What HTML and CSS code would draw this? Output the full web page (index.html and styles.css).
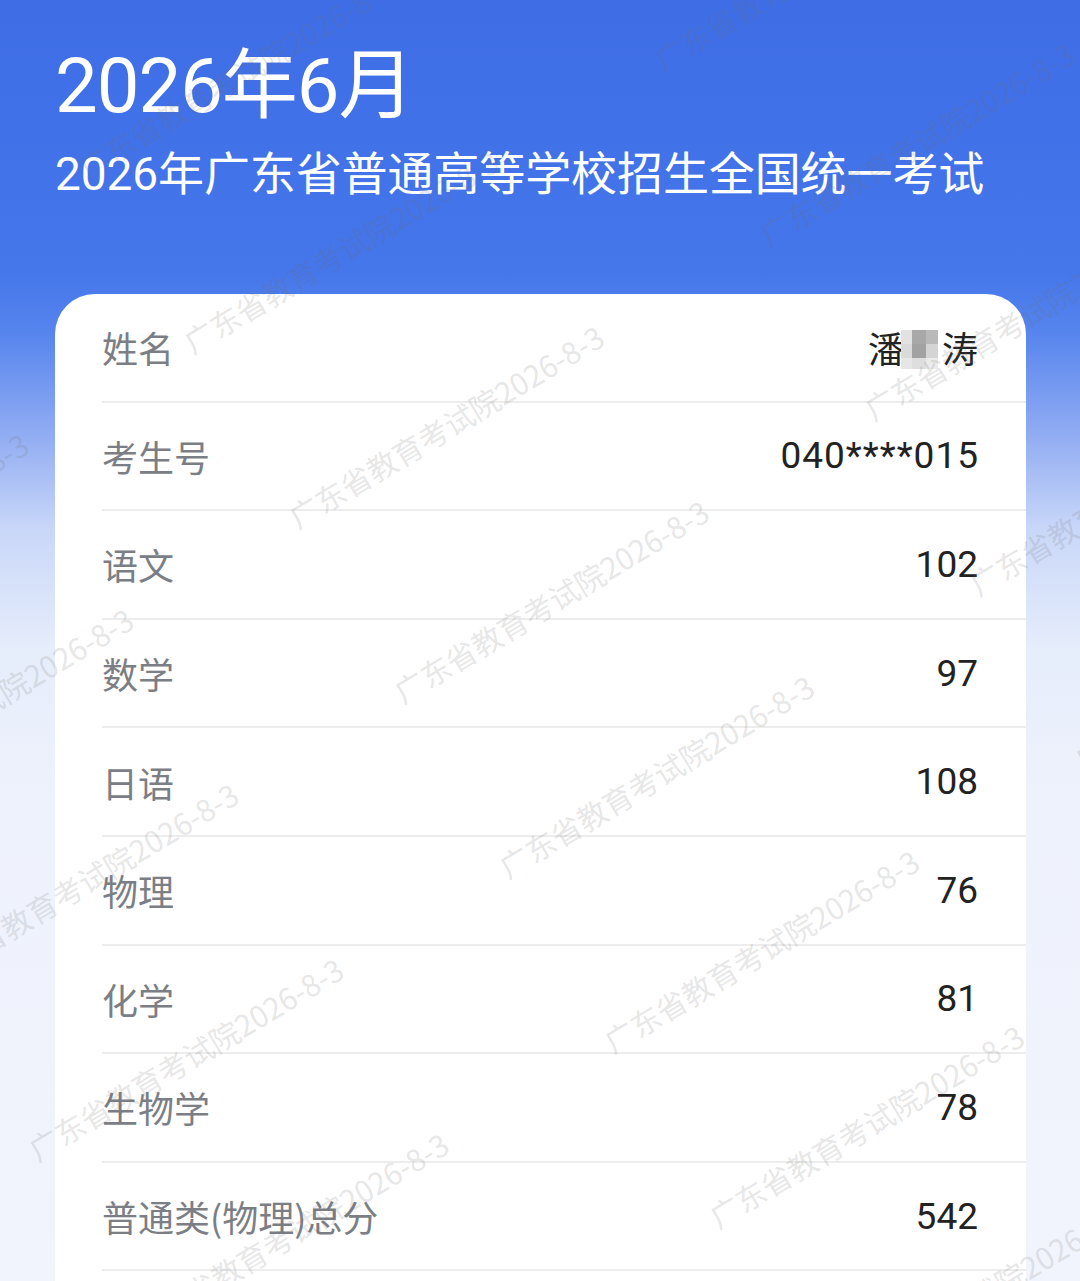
FILE: index.html
```html
<!DOCTYPE html>
<html lang="zh-CN">
<head>
<meta charset="utf-8">
<title>2026年6月 成绩</title>
<link rel="stylesheet" href="styles.css">
</head>
<body>
<div class="page">
  <header class="head">
    <h1 class="title">2026年6月</h1>
    <p class="subtitle">2026年广东省普通高等学校招生全国统一考试</p>
  </header>
  <section class="card">
    <div class="row"><span class="label">姓名</span><span class="value name">潘<span class="mosaic"><i class="m1"></i><i class="m2"></i><i class="m3"></i><i class="m4"></i><i class="m5"></i><i class="m6"></i><i class="m7"></i><i class="m8"></i><i class="m9"></i></span>涛</span></div>
    <div class="row"><span class="label">考生号</span><span class="value id">040****015</span></div>
    <div class="row"><span class="label">语文</span><span class="value">102</span></div>
    <div class="row"><span class="label">数学</span><span class="value">97</span></div>
    <div class="row"><span class="label">日语</span><span class="value">108</span></div>
    <div class="row"><span class="label">物理</span><span class="value">76</span></div>
    <div class="row"><span class="label">化学</span><span class="value">81</span></div>
    <div class="row"><span class="label">生物学</span><span class="value">78</span></div>
    <div class="row"><span class="label">普通类(物理)总分</span><span class="value">542</span></div>
  </section>
  <div class="watermarks" aria-hidden="true">
    <div class="wm-plane">
      <div class="wm-row"><span>广东省教育考试院2026-8-3</span><span>广东省教育考试院2026-8-3</span><span>广东省教育考试院2026-8-3</span><span>广东省教育考试院2026-8-3</span><span>广东省教育考试院2026-8-3</span></div>
      <div class="wm-row"><span>广东省教育考试院2026-8-3</span><span>广东省教育考试院2026-8-3</span><span>广东省教育考试院2026-8-3</span><span>广东省教育考试院2026-8-3</span><span>广东省教育考试院2026-8-3</span></div>
      <div class="wm-row"><span>广东省教育考试院2026-8-3</span><span>广东省教育考试院2026-8-3</span><span>广东省教育考试院2026-8-3</span><span>广东省教育考试院2026-8-3</span><span>广东省教育考试院2026-8-3</span></div>
      <div class="wm-row"><span>广东省教育考试院2026-8-3</span><span>广东省教育考试院2026-8-3</span><span>广东省教育考试院2026-8-3</span><span>广东省教育考试院2026-8-3</span><span>广东省教育考试院2026-8-3</span></div>
      <div class="wm-row"><span>广东省教育考试院2026-8-3</span><span>广东省教育考试院2026-8-3</span><span>广东省教育考试院2026-8-3</span><span>广东省教育考试院2026-8-3</span><span>广东省教育考试院2026-8-3</span></div>
      <div class="wm-row"><span>广东省教育考试院2026-8-3</span><span>广东省教育考试院2026-8-3</span><span>广东省教育考试院2026-8-3</span><span>广东省教育考试院2026-8-3</span><span>广东省教育考试院2026-8-3</span></div>
      <div class="wm-row"><span>广东省教育考试院2026-8-3</span><span>广东省教育考试院2026-8-3</span><span>广东省教育考试院2026-8-3</span><span>广东省教育考试院2026-8-3</span><span>广东省教育考试院2026-8-3</span></div>
      <div class="wm-row"><span>广东省教育考试院2026-8-3</span><span>广东省教育考试院2026-8-3</span><span>广东省教育考试院2026-8-3</span><span>广东省教育考试院2026-8-3</span><span>广东省教育考试院2026-8-3</span></div>
      <div class="wm-row"><span>广东省教育考试院2026-8-3</span><span>广东省教育考试院2026-8-3</span><span>广东省教育考试院2026-8-3</span><span>广东省教育考试院2026-8-3</span><span>广东省教育考试院2026-8-3</span></div>
      <div class="wm-row"><span>广东省教育考试院2026-8-3</span><span>广东省教育考试院2026-8-3</span><span>广东省教育考试院2026-8-3</span><span>广东省教育考试院2026-8-3</span><span>广东省教育考试院2026-8-3</span></div>
      <div class="wm-row"><span>广东省教育考试院2026-8-3</span><span>广东省教育考试院2026-8-3</span><span>广东省教育考试院2026-8-3</span><span>广东省教育考试院2026-8-3</span><span>广东省教育考试院2026-8-3</span></div>
      <div class="wm-row"><span>广东省教育考试院2026-8-3</span><span>广东省教育考试院2026-8-3</span><span>广东省教育考试院2026-8-3</span><span>广东省教育考试院2026-8-3</span><span>广东省教育考试院2026-8-3</span></div>
    </div>
  </div>
</div>
</body>
</html>
```
FILE: styles.css
```css
* { box-sizing: border-box; }
html, body { margin: 0; padding: 0; }
body {
  width: 1080px;
  font-family: "Noto Sans CJK SC", sans-serif;
}
.page {
  position: relative;
  width: 1080px;
  height: 1281px;
  overflow: hidden;
  padding: 0 54px 0 55px;
  background: linear-gradient(180deg, #3e6de6 0px, #4576ea 270px, #5584ed 330px, #8eaaf2 430px, #c9d7f8 530px, #e6edfb 650px, #eef2fc 800px, #f1f4fc 1281px);
}
.head {
  padding-top: 48px;
  color: #fff;
}
.title {
  margin: 0;
  font-family: Roboto, "Noto Sans CJK SC", sans-serif;
  font-size: 76px;
  font-weight: 400;
  line-height: 1;
  letter-spacing: -1px;
}
.subtitle {
  margin: 27px 0 0;
  font-family: Roboto, "Noto Sans CJK SC", sans-serif;
  font-size: 46px;
  font-weight: 400;
  line-height: 1;
  letter-spacing: -0.1px;
}
.card {
  margin-top: 97px;
  background: #fff;
  border-radius: 40px 40px 0 0;
  padding-left: 47px;
  height: 1100px;
}
.row {
  display: flex;
  align-items: center;
  justify-content: space-between;
  height: 108.6px;
  border-bottom: 2px solid #ededed;
  padding-right: 48px;
}
.label {
  font-size: 36px;
  color: #7b7e84;
  line-height: 1;
}
.value {
  font-family: Roboto, "Noto Sans CJK SC", sans-serif;
  font-size: 37px;
  color: #222;
  line-height: 1;
}
.id { letter-spacing: 1px; margin-right: -1px; }
.name {
  display: flex;
  align-items: center;
  font-family: "Noto Sans CJK SC", sans-serif;
  font-size: 36px;
}
.mosaic {
  display: grid;
  grid-template-columns: 11px 14px 12px;
  grid-template-rows: 14px 14px 11px;
  margin: 4px 4px 0 -3px;
}
.mosaic i { display: block; }
.m1 { background: #e2e2e2; }
.m2 { background: #a8a8a8; }
.m3 { background: #b9b9b9; }
.m4 { background: #dadada; }
.m5 { background: #a2a2a2; }
.m6 { background: #d4d4d4; }
.m7 { background: #e6e6e6; }
.m8 { background: #dedede; }
.m9 { background: #ebebeb; }

.watermarks {
  position: absolute;
  inset: 0;
  overflow: hidden;
  pointer-events: none;
}
.wm-plane {
  position: absolute;
  left: -1078px;
  top: 372px;
  transform: rotate(-31deg);
  transform-origin: 0 0;
  display: flex;
  flex-direction: column;
}
.wm-row {
  display: flex;
  height: 204px;
}
.wm-row span {
  flex: 0 0 549px;
  font-family: "Noto Sans CJK SC", sans-serif;
  font-size: 30px;
  line-height: 30px;
  color: rgba(110, 110, 110, 0.18);
  white-space: nowrap;
}
```
